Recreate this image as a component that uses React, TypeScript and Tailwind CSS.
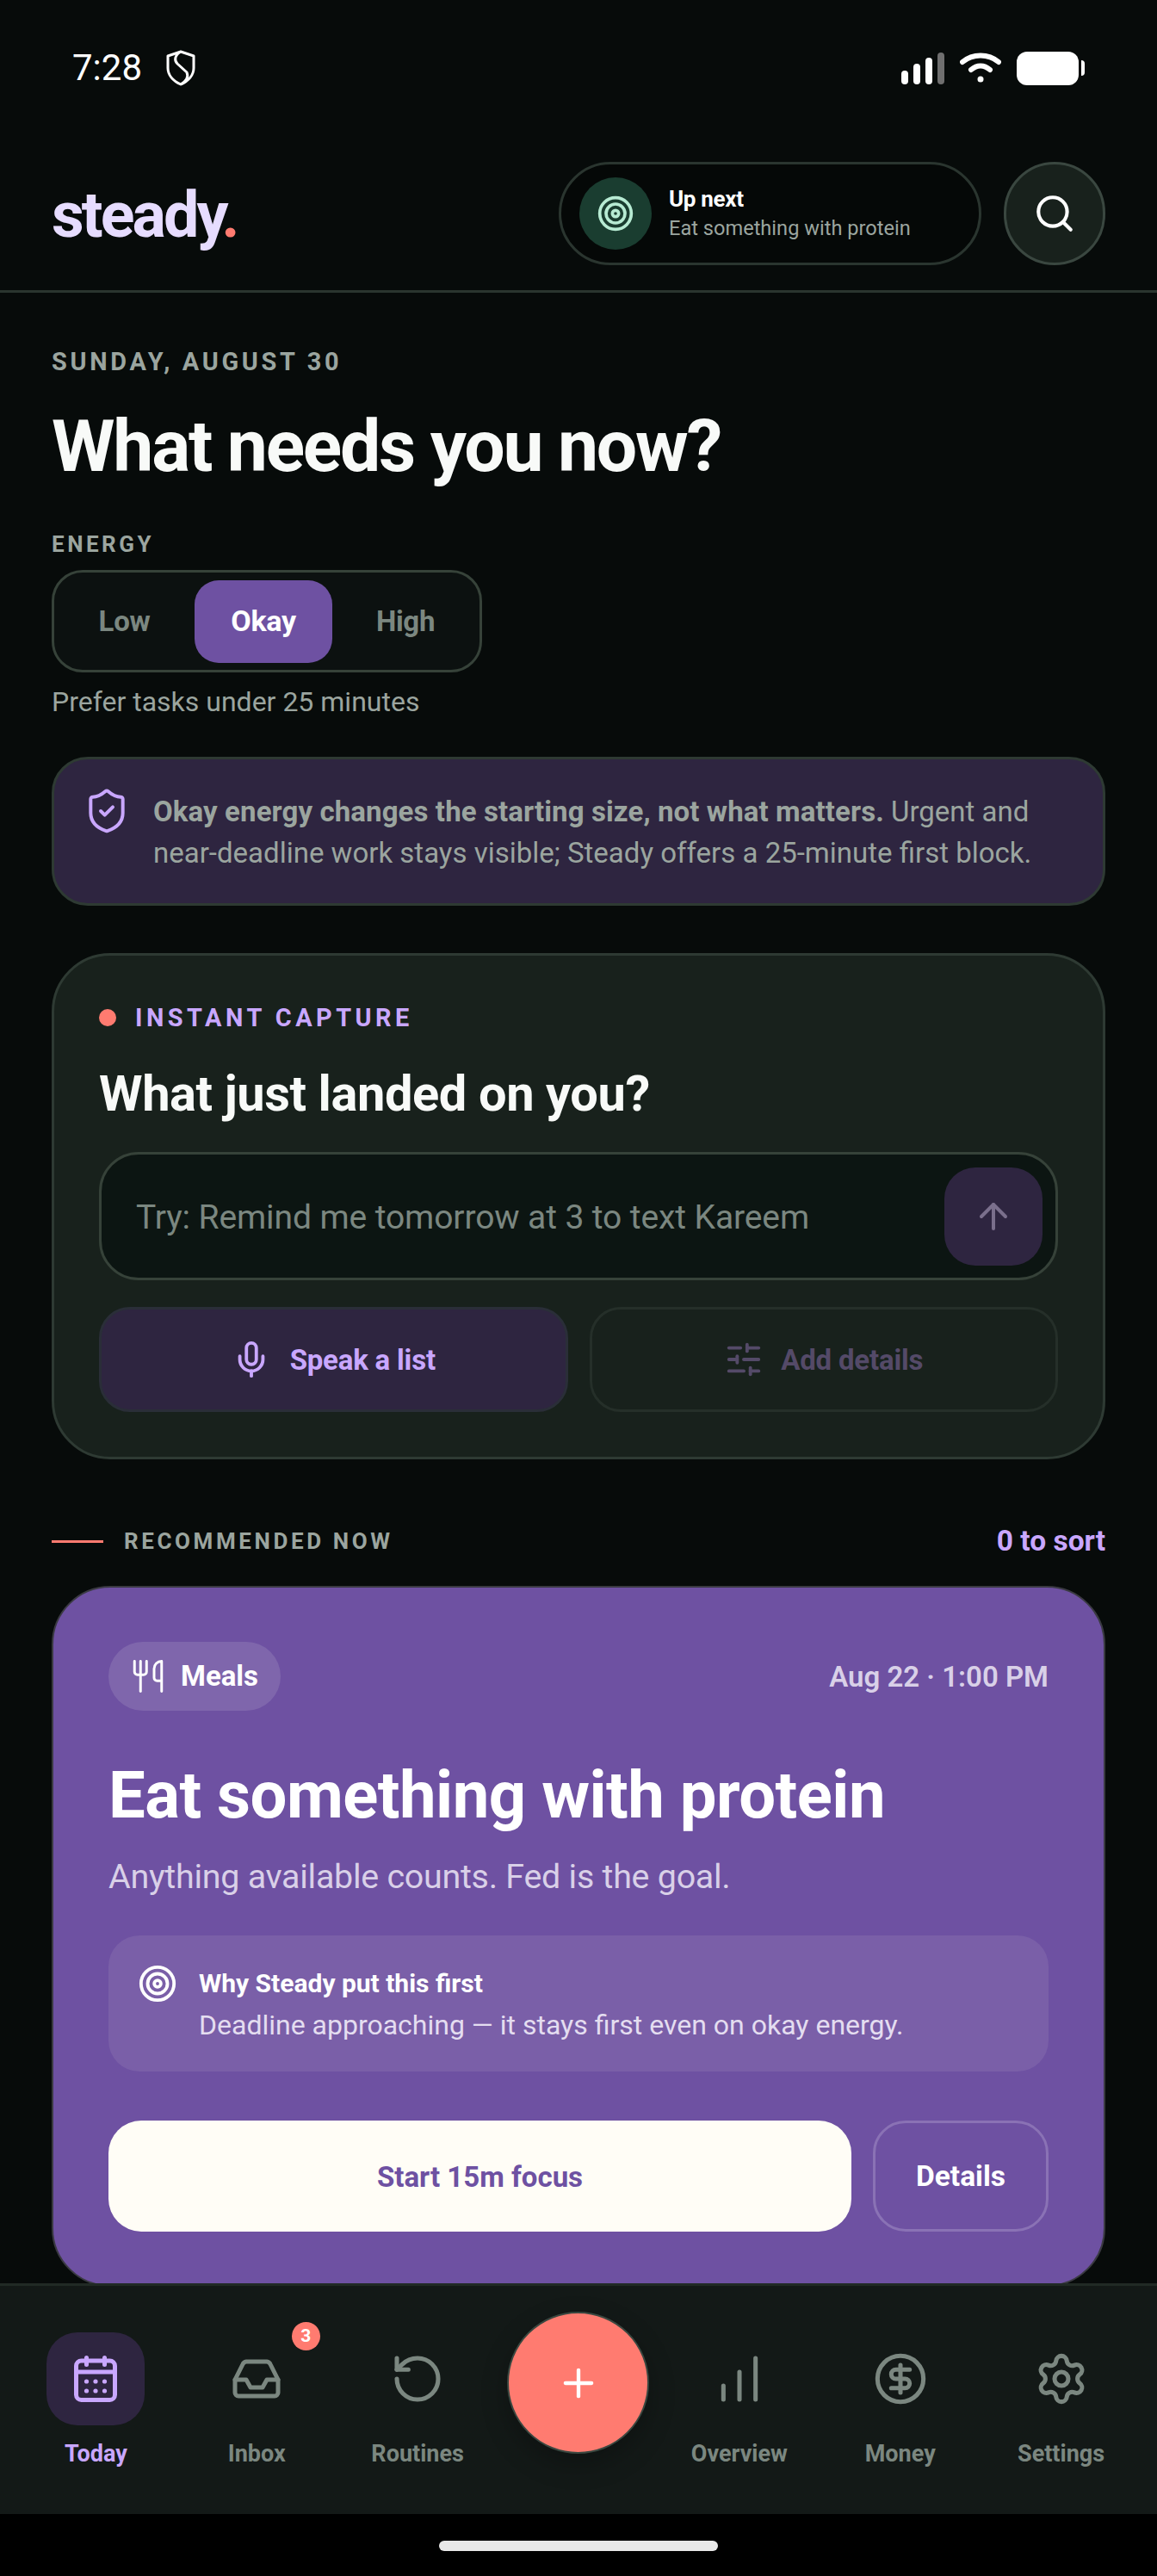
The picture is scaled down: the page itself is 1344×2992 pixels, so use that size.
import React from 'react';
import {
  ArrowUp,
  ChartNoAxesColumnIncreasing,
  CircleDollarSign,
  Mic,
  Plus,
  RotateCcw,
  Search,
  Settings,
  ShieldCheck,
  SlidersHorizontal,
  Target,
  Utensils,
} from 'lucide-react';

const CalendarIcon = () => (
  <svg width="50" height="54" viewBox="0 0 50 54" fill="none" stroke="#c9a7ff" strokeWidth="5" strokeLinecap="round" strokeLinejoin="round">
    <rect x="2.5" y="6" width="45" height="45.5" rx="6" />
    <path d="M2.5 19h45M14.5 2.5v8M35.5 2.5v8" />
    <g fill="#c9a7ff" stroke="none">
      <circle cx="14.5" cy="30" r="2.6" />
      <circle cx="25" cy="30" r="2.6" />
      <circle cx="35.5" cy="30" r="2.6" />
      <circle cx="14.5" cy="41" r="2.6" />
      <circle cx="25" cy="41" r="2.6" />
      <circle cx="35.5" cy="41" r="2.6" />
    </g>
  </svg>
);

const InboxIcon = () => (
  <svg width="56" height="46" viewBox="0 0 56 46" fill="none" stroke="#7b8780" strokeWidth="5" strokeLinecap="round" strokeLinejoin="round">
    <path d="M3 24v15a4 4 0 0 0 4 4h42a4 4 0 0 0 4-4V24L44 6a5 5 0 0 0-4-3H16a5 5 0 0 0-4 3L3 24Z" />
    <path d="M3 24h13l5 9h14l5-9h13" />
  </svg>
);

const StatusShield = () => (
  <svg width="34" height="42" viewBox="0 0 34 42" fill="none" stroke="#fff" strokeWidth="3" strokeLinejoin="round">
    <path d="M17 2 L32 7 V21 C32 29 26 36 17 40 C8 36 2 29 2 21 V7 Z" />
    <path d="M17 2 C10 6 9 12 13 16 L24 26 C26 31 24 36 17 40" />
  </svg>
);

const SignalIcon = () => (
  <div className="flex items-end gap-[6px] h-[37px]">
    <div className="w-[8px] h-[16px] rounded-full bg-white" />
    <div className="w-[8px] h-[24px] rounded-full bg-white" />
    <div className="w-[8px] h-[31px] rounded-full bg-white" />
    <div className="w-[8px] h-[37px] rounded-full bg-[#6f6f6f]" />
  </div>
);

const WifiIcon = () => (
  <svg width="48" height="36" viewBox="0 0 48 36" fill="none" stroke="#fff" strokeWidth="6" strokeLinecap="round">
    <path d="M3 11C15 1 33 1 45 11" />
    <path d="M13 20C20 14 28 14 35 20" />
    <circle cx="24" cy="31" r="3.5" fill="#fff" stroke="none" />
  </svg>
);

const navItems = [
  { label: 'Today', active: true },
  { label: 'Inbox', badge: 3 },
  { label: 'Routines' },
  { label: '' },
  { label: 'Overview' },
  { label: 'Money' },
  { label: 'Settings' },
];

const navIcon = (label: string) => {
  const props = { size: 64, color: '#7b8780', strokeWidth: 1.9 };
  switch (label) {
    case 'Today': return <CalendarIcon />;
    case 'Inbox': return <InboxIcon />;
    case 'Routines': return <RotateCcw {...props} />;
    case 'Overview': return <ChartNoAxesColumnIncreasing {...props} />;
    case 'Money': return <CircleDollarSign {...props} />;
    default: return <Settings {...props} />;
  }
};

export default function App() {
  return (
    <div className="w-[1344px] h-[2992px] flex flex-col overflow-hidden bg-[#070b0a] font-['Roboto',sans-serif] text-white">
      {/* status bar */}
      <div className="h-[156px] shrink-0 flex items-start justify-between pl-[84px] pr-[84px] pt-[55px]">
        <div className="flex items-center gap-[28px] h-[48px]">
          <span className="text-[42px] leading-none">7:28</span>
          <StatusShield />
        </div>
        <div className="flex items-center gap-[18px] h-[48px]">
          <SignalIcon />
          <WifiIcon />
          <div className="flex items-center gap-[3px]">
            <div className="w-[72px] h-[39px] rounded-[12px] bg-white" />
            <div className="w-[4px] h-[18px] rounded-r-full bg-white" />
          </div>
        </div>
      </div>

      {/* header */}
      <header className="h-[184px] shrink-0 flex items-start justify-between px-[60px] pt-[32px] border-b-[3px] border-[#2a352f]">
        <div className="text-[73.5px] leading-none font-bold tracking-[-2.9px] text-[#e6dcff] pt-[26px]">
          steady<span className="text-[#ff7b70]">.</span>
        </div>
        <div className="flex items-center gap-[26px]">
          <div className="w-[491px] h-[120px] rounded-full border-[3px] border-[#2a352f] bg-[#050807] flex items-center pl-[21px] gap-[20px]">
            <div className="w-[84px] h-[84px] rounded-full bg-[#1a3d30] flex items-center justify-center">
              <Target size={44} color="#b7ebd3" strokeWidth={2} />
            </div>
            <div className="flex flex-col">
              <span className="text-[26px] leading-[34px] font-bold tracking-[-0.3px]">Up next</span>
              <span className="text-[23.6px] leading-[34px] text-[#9ba59f]">Eat something with protein</span>
            </div>
          </div>
          <div className="w-[118px] h-[120px] rounded-full border-[3px] border-[#3a4740] bg-[#18211c] flex items-center justify-center">
            <Search size={50} color="#fff" strokeWidth={2} />
          </div>
        </div>
      </header>

      <main className="flex-1 overflow-hidden px-[60px]">
        <div className="pt-[62px] text-[28.9px] leading-[36px] font-bold tracking-[3.7px] text-[#9ba59f]">SUNDAY, AUGUST 30</div>
        <h1 className="mt-[29px] text-[84px] leading-[104px] font-bold tracking-[-2.2px] text-[#f8faf8]">What needs you now?</h1>

        <div className="mt-[45px] text-[26px] leading-[32px] font-bold tracking-[3.5px] text-[#9ba59f]">ENERGY</div>
        <div className="mt-[14px] w-[500px] h-[119px] rounded-[36px] border-[3px] border-[#364239] bg-[#0c1110] flex items-center">
          <div className="w-[163px] text-center text-[33px] font-bold tracking-[-0.3px] text-[#7b8780]">Low</div>
          <div className="w-[160px] h-[96px] rounded-[28px] bg-[#6e51a2] flex items-center justify-center text-[34px] font-bold tracking-[-0.3px]">Okay</div>
          <div className="w-[170px] text-center text-[33px] font-bold tracking-[-0.3px] text-[#7b8780]">High</div>
        </div>
        <p className="mt-[15px] text-[32px] leading-[38px] text-[#9ba59f]">Prefer tasks under 25 minutes</p>

        <div className="mt-[45px] h-[173px] rounded-[42px] border-[3px] border-[#2e3a33] bg-[#2e2540] flex pl-[33px] pt-[32px] pr-[40px]">
          <ShieldCheck size={56} color="#c9a7ff" strokeWidth={1.7} className="shrink-0" />
          <p className="ml-[26px] mt-[5px] text-[33px] leading-[48px] text-[#9ba59f]">
            <b className="font-bold tracking-[0.1px]">Okay energy changes the starting size, not what matters.</b> Urgent and near-deadline work stays visible; Steady offers a 25-minute first block.
          </p>
        </div>

        {/* instant capture */}
        <section className="mt-[55px] h-[588px] rounded-[68px] border-[3px] border-[#2e3a33] bg-[#18211c] px-[52px] pt-[54px]">
          <div className="flex items-center gap-[22px]">
            <div className="w-[20px] h-[20px] rounded-full bg-[#ff7b70]" />
            <span className="text-[28.9px] leading-[36px] font-bold tracking-[4.5px] text-[#c9a7ff]">INSTANT CAPTURE</span>
          </div>
          <h2 className="mt-[35px] text-[57.75px] leading-[70px] font-bold tracking-[-0.4px] text-[#f8faf8]">What just landed on you?</h2>
          <div className="mt-[33px] h-[149px] rounded-[46px] border-[3px] border-[#364239] bg-[#0c1512] flex items-center justify-between pl-[40px] pr-[15px]">
            <span className="pt-[3px] text-[39px] tracking-[-0.1px] text-[#7b8780]">Try: Remind me tomorrow at 3 to text Kareem</span>
            <div className="w-[114px] h-[114px] rounded-[36px] bg-[#2e2540] flex items-center justify-center">
              <ArrowUp size={48} color="#7a6f8c" strokeWidth={2} />
            </div>
          </div>
          <div className="mt-[31px] grid grid-cols-2 gap-[25px]">
            <div className="h-[122px] rounded-[36px] border-[3px] border-[#2a2e38] bg-[#2e2540] flex items-center justify-center gap-[22px]">
              <Mic size={46} color="#c9a7ff" strokeWidth={2} />
              <span className="pt-[2px] text-[33px] font-bold tracking-[-0.2px] text-[#c9a7ff]">Speak a list</span>
            </div>
            <div className="h-[122px] rounded-[36px] border-[3px] border-[#252f29] flex items-center justify-center gap-[20px]">
              <SlidersHorizontal size={46} color="#544a68" strokeWidth={2} />
              <span className="pt-[2px] text-[33px] font-bold tracking-[-0.2px] text-[#544a68]">Add details</span>
            </div>
          </div>
        </section>

        <div className="mt-[77px] h-[36px] flex items-center justify-between">
          <div className="flex items-center gap-[24px]">
            <div className="w-[60px] h-[3px] bg-[#ff7b70]" />
            <span className="text-[26px] font-bold tracking-[3.6px] text-[#9ba59f]">RECOMMENDED NOW</span>
          </div>
          <span className="text-[33.5px] font-bold text-[#c9a7ff]">0 to sort</span>
        </div>

        {/* recommended card */}
        <section className="mt-[34px] h-[814px] rounded-[68px] border-[2px] border-[#3a3a42] bg-[#6e51a2] px-[64px] pt-[63px]">
          <div className="flex items-center justify-between">
            <div className="h-[80px] pl-[25px] pr-[26px] rounded-full bg-[#7f66ac] flex items-center gap-[17px]">
              <Utensils size={42} color="#fff" strokeWidth={1.7} />
              <span className="text-[33px] font-bold">Meals</span>
            </div>
            <span className="pt-[2px] text-[33px] font-semibold text-[#d9d0e8]">Aug 22 · 1:00 PM</span>
          </div>
          <h3 className="mt-[54px] text-[76px] leading-[88px] font-bold tracking-[-0.5px]">Eat something with protein</h3>
          <p className="mt-[27px] text-[39.4px] leading-[48px] tracking-[-0.25px] text-[#d9d0e8]">Anything available counts. Fed is the goal.</p>
          <div className="mt-[44px] h-[158px] rounded-[36px] bg-[#7a5fa8] flex pl-[34px] pt-[37px] gap-[25px]">
            <Target size={46} color="#fff" strokeWidth={2} className="shrink-0 -mt-[4px]" />
            <div className="flex flex-col">
              <span className="text-[30px] leading-[38px] font-bold">Why Steady put this first</span>
              <span className="mt-[8px] text-[32px] leading-[42px] text-[#e4ddf0]">Deadline approaching — it stays first even on okay energy.</span>
            </div>
          </div>
          <div className="mt-[57px] flex gap-[25px]">
            <div className="flex-1 h-[129px] pt-[2px] rounded-[38px] bg-[#fffdf6] flex items-center justify-center text-[33px] font-bold text-[#6e51a2]">Start 15m focus</div>
            <div className="w-[204px] h-[129px] pt-[2px] rounded-[38px] border-[3px] border-[#8a72b5] flex items-center justify-center text-[33.5px] font-bold">Details</div>
          </div>
        </section>
      </main>

      {/* bottom nav */}
      <nav className="relative h-[268px] shrink-0 border-t-[3px] border-[#212a25] bg-[#131917] grid grid-cols-7 px-[18px] pt-[54px]">
        {navItems.map((item, i) =>
          i === 3 ? (
            <div key={i} className="flex justify-center">
              <div className="w-[165px] h-[165px] -mt-[24px] rounded-full border-[2px] border-[#3a4740] bg-[#ff7b70] flex items-center justify-center shadow-[0_12px_30px_rgba(0,0,0,0.25)]">
                <Plus size={52} color="#fff" strokeWidth={2} />
              </div>
            </div>
          ) : (
            <div key={i} className="relative flex flex-col items-center">
              <div className={`w-[114px] h-[108px] rounded-[36px] flex items-center justify-center ${item.active ? 'bg-[#2e2540]' : ''}`}>
                {navIcon(item.label)}
              </div>
              <span className={`mt-[15px] text-[27px] leading-[36px] font-bold ${item.active ? 'text-[#c9a7ff]' : 'text-[#7b8780]'}`}>{item.label}</span>
              {item.badge && (
                <div className="absolute left-[134px] -top-[12px] w-[33px] h-[33px] rounded-full bg-[#ff7b70] flex items-center justify-center text-[21px] font-bold">{item.badge}</div>
              )}
            </div>
          )
        )}
      </nav>
      <div className="h-[72px] shrink-0 bg-black flex justify-center pt-[31px]">
        <div className="w-[324px] h-[12px] rounded-full bg-[#e8e8e8]" />
      </div>
    </div>
  );
}
